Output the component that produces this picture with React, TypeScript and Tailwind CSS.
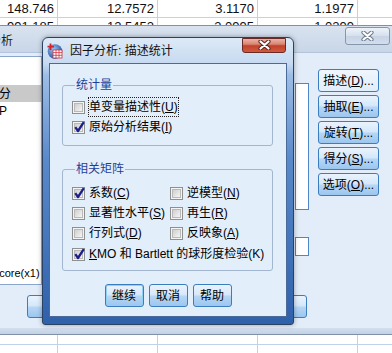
import React from 'react';

// spreadsheet behind the dialogs
const sheetRows = [
  { h: 'h-[18px]', vals: ['148.746', '12.7572', '3.1170', '1.1977'] },
  { h: 'h-[18px]', vals: ['991.185', '12.5452', '3.0995', '1.0299'] },
  { h: 'h-[309px]', vals: ['', '', '', ''] },
  { h: 'h-[18px]', vals: ['', '', '', ''] },
];

const XMark = ({ dark }: { dark: string }) => (
  <svg width="13" height="10" viewBox="0 0 13 10">
    <path d="M2.5 1.5 L10.5 8.5 M10.5 1.5 L2.5 8.5" stroke={dark} strokeWidth="4.2" strokeLinecap="round" />
    <path d="M2.5 1.5 L10.5 8.5 M10.5 1.5 L2.5 8.5" stroke="#ffffff" strokeWidth="2.2" strokeLinecap="round" />
  </svg>
);

const Check = ({ on }: { on?: boolean }) => (
  <span className="relative flex h-[13px] w-[13px] shrink-0 items-center justify-center border border-[#8e8f8f] bg-[#f4f4f4]">
    <span className="h-[9px] w-[9px] border border-[#b9b9b9] bg-[linear-gradient(135deg,#cfcfcf,#f5f5f5)]" />
    {on && (
      <svg className="absolute left-[0px] top-[-2px]" width="13" height="14" viewBox="0 0 13 14">
        <path d="M2.3 7.2 L5 11 L10.8 2.2" fill="none" stroke="#1e1e8a" strokeWidth="2.3" strokeLinejoin="round" />
      </svg>
    )}
  </span>
);

const Label = ({ text, k, focus }: { text: string; k: string; focus?: boolean }) => (
  <span
    className={`whitespace-nowrap border leading-[18px] ${focus ? 'border-dotted border-[#222]' : 'border-transparent'}`}
  >
    {text}(<u>{k}</u>)
  </span>
);

const Row = ({ on, text, k, focus }: { on?: boolean; text: string; k: string; focus?: boolean }) => (
  <div className="flex h-[20px] items-center gap-[3px]">
    <Check on={on} />
    <Label text={text} k={k} focus={focus} />
  </div>
);

const btnBlue =
  'flex h-[23px] shrink-0 items-center justify-center whitespace-nowrap rounded-[3px] border border-[#3a7ec0] bg-[linear-gradient(#eaf3fd,#d6e8fa_45%,#b5d5f5_55%,#9cc6ef)] text-[12px] text-black';

const AppIcon = () => (
  <svg width="16" height="16" viewBox="0 0 16 16">
    <defs>
      <radialGradient id="ball" cx="0.4" cy="0.35" r="0.7">
        <stop offset="0" stopColor="#9cc3f0" />
        <stop offset="1" stopColor="#1f4f9e" />
      </radialGradient>
    </defs>
    <circle cx="8" cy="8.5" r="7.3" fill="url(#ball)" />
    <rect x="6" y="7" width="9" height="8" fill="#ffffff" stroke="#d0313b" strokeWidth="0.8" />
    <path d="M6 9.6 H15 M6 12.3 H15 M9 7 V15 M12 7 V15" stroke="#d0313b" strokeWidth="0.8" />
    <path d="M3.5 0.5 V7 M0.5 3.6 H7" stroke="#d4232e" strokeWidth="1.8" />
  </svg>
);

export default function App() {
  return (
    <div className="relative h-[353px] w-[392px] overflow-hidden bg-white font-['Liberation_Sans','Noto_Sans_CJK_SC',sans-serif] text-[12px] text-black">
      {/* sheet */}
      <div className="flex flex-col">
        {sheetRows.map((r, i) => (
          <div key={i} className={`flex ${r.h} border-b border-[#bed3ec]`}>
            {r.vals.map((v, j) => (
              <div
                key={j}
                className={`${j === 0 ? 'w-[58px]' : 'w-[100px]'} shrink-0 border-r border-[#bed3ec] pr-[3px] text-right text-[13px] leading-[17px] text-[#111]`}
              >
                {v}
              </div>
            ))}
          </div>
        ))}
      </div>

      {/* parent dialog 因子分析 */}
      <div className="absolute left-[-72px] top-[25px] flex h-[310px] w-[480px] flex-col border border-[#7f90a8] bg-[#c9d7e8]">
        <div className="flex h-[26px] bg-[linear-gradient(#d9e3ef,#c8d6e7)]">
          <span className="ml-[36px] mt-[6px] text-[12px] text-[#1c1c1c]">因子分析</span>
          <div className="ml-auto mr-[17px] mt-[1px] flex h-[18px] w-[45px] items-center justify-center rounded-[3px] border border-[#8596ad] bg-[linear-gradient(#eef3f9,#d5e0ed_50%,#c6d4e6_51%,#d3deeb)]">
            <XMark dark="#6d7a8c" />
          </div>
        </div>
        <div className="flex h-[276px] border-t border-[#b3c4da] bg-[#e3edf9]">
          <div className="ml-[11px] mt-[3px] flex w-[102px] shrink-0 flex-col">
            <div className="flex h-[229px] w-[102px] flex-col border border-[#8aa6cc] bg-white pt-[28px] text-[11px]">
              <div className="flex h-[17px] items-center bg-[#c9c9c9] pl-[46px] text-[12px]">得分</div>
              <div className="flex h-[17px] items-center pl-[40px] text-[12px]">GDP</div>
              <div className="mt-auto mb-[2px] flex h-[17px] items-center pl-[46px]">Zscore(x1)</div>
            </div>
            <div className={`${btnBlue} ml-[87px] mt-[10px] w-[60px]`}>确定</div>
          </div>
          <div className="ml-[253px] mt-[30px] flex w-[14px] shrink-0 flex-col">
            <div className="h-[127px] border border-[#4d86c9] bg-white" />
            <div className="mt-[27px] h-[19px] border border-[#4d86c9] bg-white" />
            <div className={`${btnBlue} ml-[-38px] mt-[39px] w-[50px]`}>帮助</div>
          </div>
          <div className="ml-[9px] mt-[16px] flex w-[61px] shrink-0 flex-col gap-[3px]">
            <div className="flex h-[23px] items-center justify-center whitespace-nowrap rounded-[3px] border border-[#3a7ec0] bg-[linear-gradient(#eff6fe,#e1eefb)] text-[12px]">
              描述(<u>D</u>)...
            </div>
            <div className={btnBlue}>
              抽取(<u>E</u>)...
            </div>
            <div className={btnBlue}>
              旋转(<u>T</u>)...
            </div>
            <div className={btnBlue}>
              得分(<u>S</u>)...
            </div>
            <div className={btnBlue}>
              选项(<u>O</u>)...
            </div>
          </div>
        </div>
        <div className="flex-1 bg-[linear-gradient(#d3dfee,#c2d1e4)]" />
      </div>

      {/* child dialog 描述统计 */}
      <div className="absolute left-[42px] top-[37px] flex h-[288px] w-[252px] flex-col rounded-b-[3px] rounded-t-[6px] border border-[#2b4163] bg-[linear-gradient(#dde9f6,#c6daf1_9%,#9dbde6_13%,#5b8acb_42%,#2f60aa)] shadow-[0_0_5px_rgba(0,0,0,0.35)]">
        <div className="flex h-[25px] items-center">
          <span className="ml-[4px] mt-[1px]">
            <AppIcon />
          </span>
          <span className="ml-[7px] mt-[1px] text-[12px] text-[#111]">因子分析: 描述统计</span>
          <div className="ml-auto mr-[7px] mt-[-11px] flex h-[15px] w-[44px] items-center justify-center rounded-b-[3px] border border-[#6a2a26] bg-[linear-gradient(#eab3a6,#d98573_40%,#c4412c_52%,#cf5a3f)]">
            <XMark dark="#5b2620" />
          </div>
        </div>
        <div className="mx-[6px] flex h-[254px] flex-col border border-[#4a6a98] bg-[#e3eefb]">
          <fieldset className="ml-[12px] mr-[13px] mt-[13px] rounded-[3px] border border-[#a3b6cf] pb-[8px] pl-[9px] pt-[4px]">
            <legend className="ml-[3px] px-[1px] leading-[16px] text-[#1f3f97]">统计量</legend>
            <Row text="单变量描述性" k="U" focus />
            <Row on text="原始分析结果" k="I" />
          </fieldset>
          <fieldset className="ml-[12px] mr-[13px] mt-[15px] rounded-[3px] border border-[#a3b6cf] pb-[6px] pl-[9px] pt-[6px]">
            <legend className="ml-[3px] px-[1px] leading-[16px] text-[#1f3f97]">相关矩阵</legend>
            <div className="flex">
              <div className="w-[98px]">
                <Row on text="系数" k="C" />
              </div>
              <Row text="逆模型" k="N" />
            </div>
            <div className="flex">
              <div className="w-[98px]">
                <Row text="显著性水平" k="S" />
              </div>
              <Row text="再生" k="R" />
            </div>
            <div className="flex">
              <div className="w-[98px]">
                <Row text="行列式" k="D" />
              </div>
              <Row text="反映象" k="A" />
            </div>
            <div className="mt-[1px] flex h-[20px] items-center gap-[3px]">
              <Check on />
              <span className="whitespace-nowrap border border-transparent leading-[18px]">
                <u>K</u>MO 和 Bartlett 的球形度检验(K)
              </span>
            </div>
          </fieldset>
          <div className="mt-[13px] flex justify-center gap-[5px]">
            <div className={`${btnBlue} w-[39px] border-[#1d3c6c] shadow-[inset_0_0_0_1px_#8fd0f5]`}>继续</div>
            <div className={`${btnBlue} w-[39px]`}>取消</div>
            <div className={`${btnBlue} w-[39px]`}>帮助</div>
          </div>
        </div>
      </div>
    </div>
  );
}
